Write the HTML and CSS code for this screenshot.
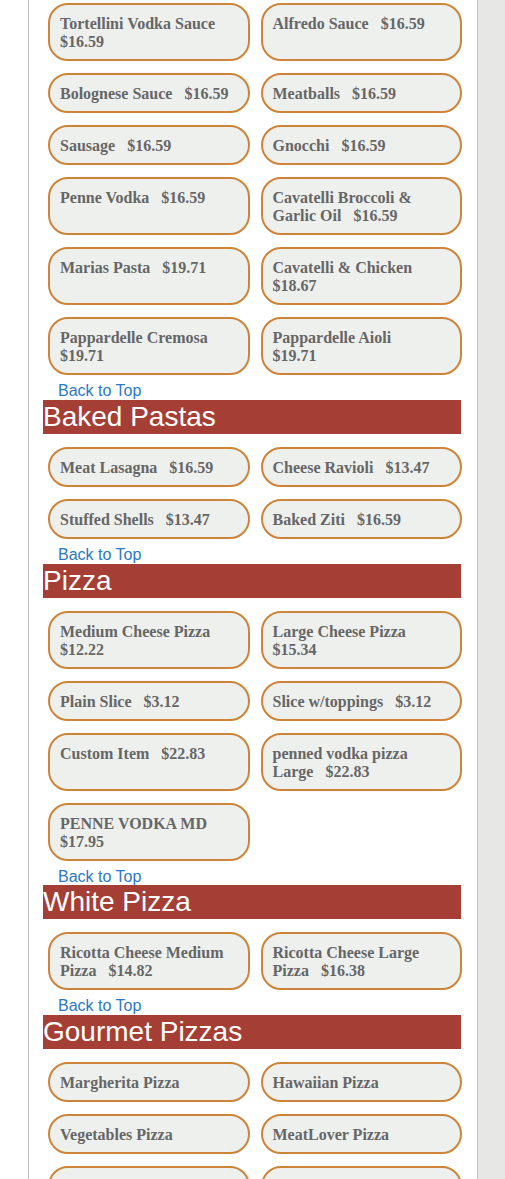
FILE: index.html
```html
<!DOCTYPE html>
<html>
<head>
<meta charset="utf-8">
<link rel="stylesheet" href="styles.css">
</head>
<body>
<div class="page">
  <div class="gutter"></div>
  <main class="panel">
    <div class="grid first">
      <div class="item">Tortellini Vodka Sauce&nbsp;&nbsp; $16.59</div>
      <div class="item">Alfredo Sauce&nbsp;&nbsp; $16.59</div>
      <div class="item">Bolognese Sauce&nbsp;&nbsp; $16.59</div>
      <div class="item">Meatballs&nbsp;&nbsp; $16.59</div>
      <div class="item">Sausage&nbsp;&nbsp; $16.59</div>
      <div class="item">Gnocchi&nbsp;&nbsp; $16.59</div>
      <div class="item">Penne Vodka&nbsp;&nbsp; $16.59</div>
      <div class="item">Cavatelli Broccoli &amp; Garlic Oil&nbsp;&nbsp; $16.59</div>
      <div class="item">Marias Pasta&nbsp;&nbsp; $19.71</div>
      <div class="item">Cavatelli &amp; Chicken&nbsp;&nbsp; $18.67</div>
      <div class="item">Pappardelle Cremosa&nbsp;&nbsp; $19.71</div>
      <div class="item">Pappardelle Aioli&nbsp;&nbsp; $19.71</div>
    </div>

    <a class="back" href="#">Back to Top</a>
    <h2 class="cat">Baked Pastas</h2>
    <div class="grid">
      <div class="item">Meat Lasagna&nbsp;&nbsp; $16.59</div>
      <div class="item">Cheese Ravioli&nbsp;&nbsp; $13.47</div>
      <div class="item">Stuffed Shells&nbsp;&nbsp; $13.47</div>
      <div class="item">Baked Ziti&nbsp;&nbsp; $16.59</div>
    </div>

    <a class="back" href="#">Back to Top</a>
    <h2 class="cat">Pizza</h2>
    <div class="grid">
      <div class="item">Medium Cheese Pizza&nbsp;&nbsp; $12.22</div>
      <div class="item">Large Cheese Pizza&nbsp;&nbsp; $15.34</div>
      <div class="item">Plain Slice&nbsp;&nbsp; $3.12</div>
      <div class="item">Slice w/toppings&nbsp;&nbsp; $3.12</div>
      <div class="item">Custom Item&nbsp;&nbsp; $22.83</div>
      <div class="item">penned vodka pizza Large&nbsp;&nbsp; $22.83</div>
      <div class="item">PENNE VODKA MD&nbsp;&nbsp; $17.95</div>
    </div>

    <a class="back" href="#">Back to Top</a>
    <h2 class="cat">White Pizza</h2>
    <div class="grid">
      <div class="item">Ricotta Cheese Medium Pizza&nbsp;&nbsp; $14.82</div>
      <div class="item">Ricotta Cheese Large Pizza&nbsp;&nbsp; $16.38</div>
    </div>

    <a class="back" href="#">Back to Top</a>
    <h2 class="cat">Gourmet Pizzas</h2>
    <div class="grid">
      <div class="item">Margherita Pizza</div>
      <div class="item">Hawaiian Pizza</div>
      <div class="item">Vegetables Pizza</div>
      <div class="item">MeatLover Pizza</div>
      <div class="item">Chicken Pizza</div>
      <div class="item">Buffalo Pizza</div>
    </div>
  </main>
  <div class="side"></div>
</div>
</body>
</html>
```

FILE: styles.css
```css
html, body {
  margin: 0;
  padding: 0;
  background: #ffffff;
}

.page {
  display: flex;
  height: 1179px;
  overflow: hidden;
}

.gutter {
  width: 28px;
  flex: none;
  background: #ffffff;
}

.panel {
  flex: none;
  width: 419px;
  background: #ffffff;
  border-left: 1px solid #c4c4c4;
  border-right: 1px solid #c4c4c4;
  padding: 0 15px 0 14px;
}

.side {
  flex: 1;
  background: #e7e8e6;
}

.grid {
  display: grid;
  grid-template-columns: 1fr 1fr;
  column-gap: 11px;
  row-gap: 12px;
  padding: 13px 0 6px 5px;
}

.grid.first {
  padding-top: 3px;
}

.item {
  border: 2px solid #cd8438;
  border-radius: 20px;
  background: #eef0ee;
  color: #666666;
  font-family: "Liberation Serif", "Times New Roman", serif;
  font-weight: bold;
  font-size: 16px;
  line-height: 18px;
  padding: 10px 16px 8px 10px;
}

.back {
  display: block;
  padding: 1px 0 0 15px;
  font-family: "Liberation Sans", Arial, sans-serif;
  font-size: 16px;
  line-height: 17.75px;
  color: #2a78c4;
  text-decoration: none;
}

.cat {
  margin: 0 1px 0 0;
  background: #a53f36;
  color: #ffffff;
  font-family: "Liberation Sans", Arial, sans-serif;
  font-weight: normal;
  font-size: 28px;
  line-height: 34px;
  height: 34px;
  box-sizing: border-box;
  padding: 0;
}
```
